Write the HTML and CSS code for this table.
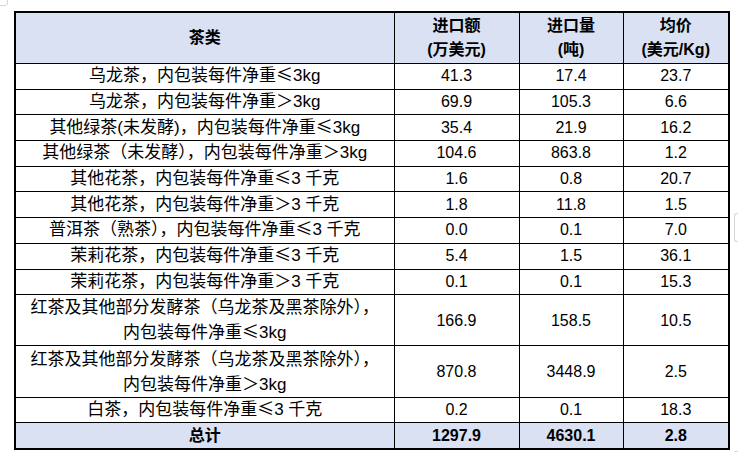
FILE: index.html
```html
<!DOCTYPE html>
<html lang="zh">
<head>
<meta charset="utf-8">
<title>茶类进口</title>
<link rel="stylesheet" href="styles.css">
</head>
<body>
<div class="frame">
  <span class="mark mark-tl"></span>
  <span class="mark mark-r"></span>
  <span class="mark mark-br"></span>
  <table class="tea">
    <colgroup>
      <col class="c-name">
      <col class="c-val">
      <col class="c-qty">
      <col class="c-avg">
    </colgroup>
    <thead>
      <tr class="head">
        <th>茶类</th>
        <th>进口额<br>(万美元)</th>
        <th>进口量<br>(吨)</th>
        <th>均价<br>(美元/Kg)</th>
      </tr>
    </thead>
    <tbody>
      <tr><td class="name">乌龙茶，内包装每件净重<span class="sym">≤</span>3kg</td><td>41.3</td><td>17.4</td><td>23.7</td></tr>
      <tr><td class="name">乌龙茶，内包装每件净重＞3kg</td><td>69.9</td><td>105.3</td><td>6.6</td></tr>
      <tr><td class="name">其他绿茶(未发酵)，内包装每件净重<span class="sym">≤</span>3kg</td><td>35.4</td><td>21.9</td><td>16.2</td></tr>
      <tr><td class="name">其他绿茶（未发酵），内包装每件净重＞3kg</td><td>104.6</td><td>863.8</td><td>1.2</td></tr>
      <tr><td class="name">其他花茶，内包装每件净重<span class="sym">≤</span>3 千克</td><td>1.6</td><td>0.8</td><td>20.7</td></tr>
      <tr><td class="name">其他花茶，内包装每件净重＞3 千克</td><td>1.8</td><td>11.8</td><td>1.5</td></tr>
      <tr><td class="name">普洱茶（熟茶），内包装每件净重<span class="sym">≤</span>3 千克</td><td>0.0</td><td>0.1</td><td>7.0</td></tr>
      <tr><td class="name">茉莉花茶，内包装每件净重<span class="sym">≤</span>3 千克</td><td>5.4</td><td>1.5</td><td>36.1</td></tr>
      <tr><td class="name">茉莉花茶，内包装每件净重＞3 千克</td><td>0.1</td><td>0.1</td><td>15.3</td></tr>
      <tr class="tall"><td class="name">红茶及其他部分发酵茶（乌龙茶及黑茶除外），<br>内包装每件净重<span class="sym">≤</span>3kg</td><td>166.9</td><td>158.5</td><td>10.5</td></tr>
      <tr class="tall"><td class="name">红茶及其他部分发酵茶（乌龙茶及黑茶除外），<br>内包装每件净重＞3kg</td><td>870.8</td><td>3448.9</td><td>2.5</td></tr>
      <tr><td class="name">白茶，内包装每件净重<span class="sym">≤</span>3 千克</td><td>0.2</td><td>0.1</td><td>18.3</td></tr>
      <tr class="total"><td>总计</td><td>1297.9</td><td>4630.1</td><td>2.8</td></tr>
    </tbody>
  </table>
</div>
</body>
</html>
```
FILE: styles.css
```css
html, body {
  margin: 0;
  padding: 0;
  background: #fff;
}
body {
  font-family: "Liberation Sans", "Noto Sans CJK SC", sans-serif;
  font-size: 16px;
  color: #000;
}
.frame {
  position: relative;
  width: 738px;
  height: 453px;
  padding: 11px 0 0 14px;
  box-sizing: border-box;
}
.mark {
  position: absolute;
  border: 1px solid #d6d6d6;
}
.mark-tl {
  left: -4px;
  top: -4px;
  width: 10px;
  height: 8px;
  border-radius: 0 0 3px 0;
}
.mark-r {
  left: 734px;
  top: 213px;
  width: 8px;
  height: 27px;
  border-right: none;
  border-radius: 3px 0 0 3px;
}
.mark-br {
  left: 734px;
  top: 451px;
  width: 6px;
  height: 4px;
  border-width: 1px 0 0 0;
}
.tea {
  border-collapse: collapse;
  border: 2px solid #000;
  table-layout: fixed;
  width: 714px;
}
.c-name { width: 379px; }
.c-val { width: 125px; }
.c-qty { width: 104px; }
.c-avg { width: 106px; }
.tea th,
.tea td {
  border: 1px solid #000;
  padding: 0;
  text-align: center;
  vertical-align: middle;
  line-height: 18px;
  white-space: nowrap;
}
.tea td.name {
  font-size: 17px;
  overflow: visible;
}
.sym {
  font-family: "Noto Sans CJK SC", sans-serif;
  line-height: 1px;
}
.head th {
  background: #d9e1f2;
  font-weight: bold;
  line-height: 24px;
  height: 50px;
}
.tea tbody tr {
  height: 25.7px;
}
.tea tbody tr.tall {
  height: 51.3px;
}
.tea .tall td {
  line-height: 25px;
}
.total td {
  background: #d9e1f2;
  font-weight: bold;
  height: 24px;
}
```
